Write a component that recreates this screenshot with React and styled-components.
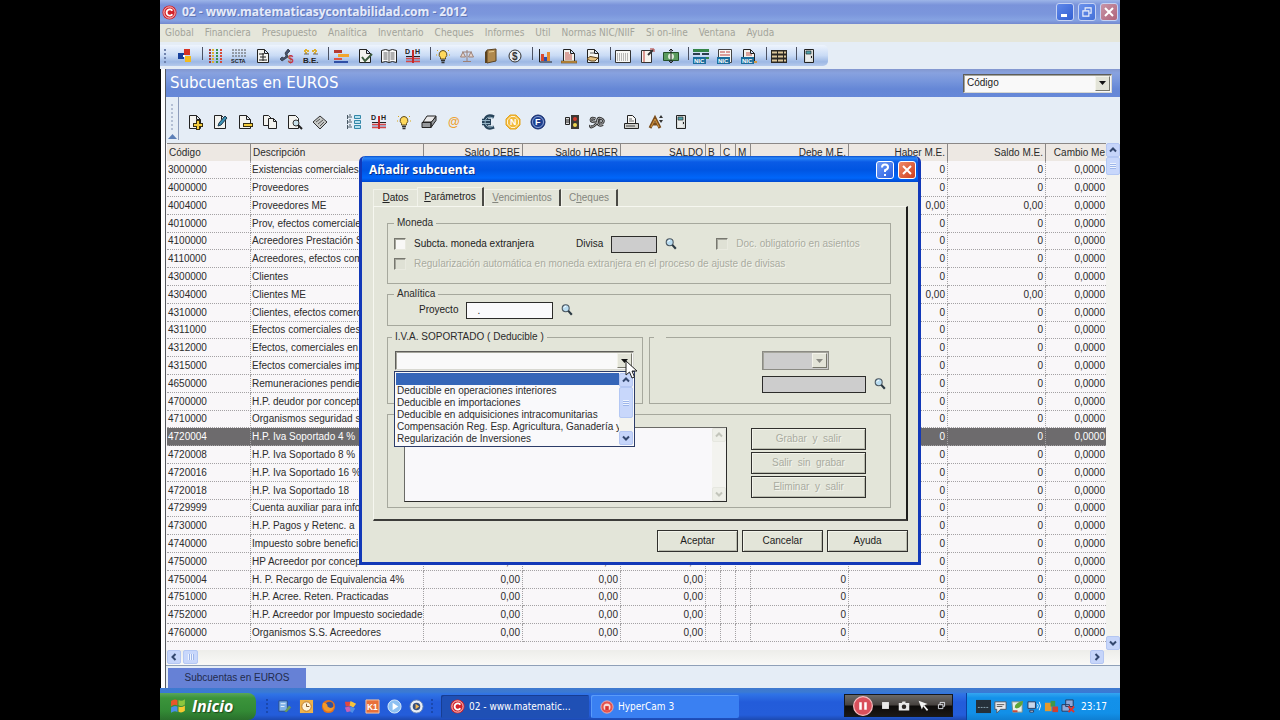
import React from "react";
import styled, { createGlobalStyle, css } from "styled-components";

const ui = '"Liberation Sans", Arial, sans-serif';
const tahoma = '"DejaVu Sans Condensed", "DejaVu Sans", Tahoma, sans-serif';

const Global = createGlobalStyle`
  *, *::before, *::after { box-sizing: border-box; }
  body { margin: 0; background: #000; font: 10px/12px ${ui}; color: #2b2b2b; }
  button, input, select, textarea { font: inherit; color: inherit; margin: 0; border-radius: 0; }
`;

const Desktop = styled.main`
  position: relative;
  display: flex;
  flex-direction: column;
  width: 75%;
  min-height: 100vh;
  margin: 0 auto;
  background: #e5edf6;
  overflow: hidden;
`;

/* Application frame */
const TitleBar = styled.header`
  display: flex;
  align-items: center;
  gap: 5px;
  height: 24px;
  padding: 0 2px;
  background: linear-gradient(#9db5e8 0, #7a93da 5px, #7b96dc 14px, #86a3e2 20px, #7389cf 24px);
  color: #e6ebfa;
  font: bold 12px/24px "Open Sans", sans-serif;
  text-shadow: 1px 1px 0 #6077b8;
`;
const TitleText = styled.h1`
  flex: 1;
  margin: 0;
  font: inherit;
`;
const WindowButtons = styled.div`
  display: flex;
  gap: 4px;
`;
const CaptionButton = styled.button`
  display: grid;
  place-items: center;
  width: 18px;
  height: 18px;
  padding: 0;
  border: 1px solid ${(p) => (p.$strong ? "#fff" : "#c5d2f4")};
  border-radius: 3px;
  background: ${(p) => p.$fill};
`;

const MenuBar = styled.nav`
  display: flex;
  gap: 11px;
  height: 18px;
  padding-left: 5px;
  background: #e5e6da;
`;
const MenuLink = styled.a`
  color: #a3a49b;
  font: 10px/18px ${tahoma};
  text-decoration: none;
`;

const ToolbarRow = styled.div`
  height: 27px;
  padding-top: 3px;
`;
const MainToolbar = styled.div`
  display: flex;
  align-items: center;
  width: max-content;
  height: 21px;
  padding: 0 7px 0 4px;
  border-radius: 0 5px 5px 0;
  background: linear-gradient(#eef4fd, #c9dbf5 50%, #9db8e4 80%, #b5caec);
`;
const Grip = styled.span`
  width: 2px;
  height: ${(p) => p.$h}px;
  margin-right: ${(p) => p.$gap || 0}px;
  background: repeating-linear-gradient(${(p) => p.$color || "#6f83ad"} 0 2px, transparent 2px 4px);
`;
const ToolButton = styled.button`
  display: grid;
  place-items: center;
  width: ${(p) => p.$w}px;
  height: 20px;
  padding: 0;
  border: 0;
  background: none;
`;
const ToolSeparator = styled.span`
  width: 6px;
  height: 13px;
  margin-bottom: 4px;
  border-right: 1px solid #4b5263;
`;

/* Child window */
const Child = styled.section`
  display: flex;
  flex: 1;
  flex-direction: column;
  padding-left: 4px;
  border-left: 1px solid #000;
  background: #fdfdfd;
`;
const ChildInner = styled.div`
  display: flex;
  flex: 1;
  flex-direction: column;
  min-width: 0;
  border-left: 1px solid #55585f;
  background: #f9f7f9;
`;
const ChildTitle = styled.div`
  display: flex;
  align-items: center;
  justify-content: space-between;
  height: 28px;
  padding: 0 8px 0 4px;
  background: linear-gradient(#8397cf, #88a2df 4px, #7796dc 12px, #6587d6 20px, #6688d8);
  color: #fff;
`;
const ChildHeading = styled.h2`
  margin: 0;
  font: 15px/28px "DejaVu Sans", Verdana, sans-serif;
`;
const SelectBox = styled.span`
  position: relative;
  display: flex;
  width: ${(p) => p.$w}px;
  height: ${(p) => p.$h}px;
  border: 1px solid;
  border-color: ${(p) => (p.disabled ? "#8b8b84" : "#5e5e5a #d8d8d0 #d8d8d0 #5e5e5a")};
  background: ${(p) => (p.disabled ? "#cdcdcd" : "#f9f9f9")};
  box-shadow: inset 1px 1px 0 #a5a59c;
  color: #222;
`;
const NativeSelect = styled.select`
  flex: 1;
  min-width: 0;
  padding: 0 3px;
  border: 0;
  background: transparent;
  appearance: none;
  opacity: 1;
`;
const SelectArrow = styled.span`
  display: grid;
  place-items: center;
  width: 15px;
  margin: 1px;
  border: 1px solid;
  border-color: #f3f3ea #77776c #77776c #f3f3ea;
  background: #e3e4d8;
  pointer-events: none;
`;

const ChildTools = styled.div`
  display: flex;
  height: 46px;
  background: #e5edf6;
`;
const ToolsHandle = styled.div`
  display: flex;
  flex-direction: column;
  align-items: center;
  justify-content: space-between;
  width: 13px;
  padding: 7px 0 1px;
  border-right: 1px solid #8d9cba;
  margin-bottom: 3px;
`;
const ToolGroups = styled.div`
  display: flex;
  gap: 9px;
  height: 49px;
  align-items: center;
  padding-left: 3px;
`;
const ToolGroup = styled.div`
  display: flex;
`;

/* Grid */
const GridArea = styled.div`
  display: flex;
  flex: 1;
`;
const GridClip = styled.div`
  flex: 1;
  min-width: 0;
  overflow: hidden;
  padding: 0 0 8px 1px;
`;
const Grid = styled.table`
  width: calc(100% + 2px);
  table-layout: fixed;
  border-spacing: 0;
`;
const Th = styled.th`
  height: 18px;
  padding: 0 2px 1px;
  border: solid #8b8887;
  border-width: 1px 1px 0 0;
  background: #ede8e3;
  font-weight: normal;
  line-height: 15px;
  text-align: ${(p) => p.$align};
  white-space: nowrap;
  overflow: hidden;
`;
const Td = styled.td`
  height: inherit;
  padding: 0 2px 0 1px;
  border: dotted #a4a2a4;
  border-width: 0 1px 1px 0;
  line-height: 16px;
  text-align: ${(p) => p.$align};
  white-space: nowrap;
  overflow: hidden;
`;
const Tr = styled.tr`
  height: 18px;
  &:nth-child(5n) { height: 17px; }
  ${(p) => p.$selected && css`
    background: #6d6b6d;
    color: #fff;
  `}
`;

const VTrack = styled.div`
  display: flex;
  flex-direction: column;
  width: 14px;
  background: #f3f3ef;
  & > :last-child { margin-top: auto; }
`;
const HTrack = styled.div`
  display: flex;
  height: 15px;
  padding: 0 16px 0 1px;
  background: linear-gradient(#ededea, #f9f9f7);
  & > :last-child { margin-left: auto; }
`;
const ScrollButton = styled.button`
  display: grid;
  place-items: center;
  width: 14px;
  height: 14px;
  padding: 0;
  border: 1px solid ${(p) => (p.disabled ? "#e6e7e0" : "#b4c6f2")};
  border-radius: 2px;
  background: ${(p) => (p.disabled ? "#eeefe8" : "#c6d5fa")};
`;
const Thumb = styled.span`
  width: ${(p) => p.$w || 14}px;
  height: ${(p) => p.$h || 14}px;
  border: 1px solid #b4c8f4;
  border-radius: 2px;
  margin-left: ${(p) => p.$ml || 0}px;
  background:
    repeating-linear-gradient(${(p) => (p.$side ? "90deg, " : "")}#eef4fe 0 1px, #9db5ea 1px 2px) center / 6px 6px no-repeat,
    #c8d7fb;
`;

const TabStrip = styled.div`
  height: 23px;
  padding: 2px 2px 1px;
  border-top: 1px solid #8fa0b8;
  background: #e5edf6;
`;
const WindowTab = styled.button`
  width: 138px;
  height: 20px;
  padding: 0;
  border: 0;
  background: #6681d6;
  color: #222b4c;
`;

/* Dialog */
const Dialog = styled.section`
  position: absolute;
  top: 156px;
  left: 0;
  right: 0;
  width: 562px;
  margin: 0 auto;
  border: solid #1238b8;
  border-width: 0 3px 3px;
  border-radius: 6px 6px 0 0;
  background: #e3e5d9;
  overflow: hidden;
`;
const DialogTitle = styled.header`
  display: flex;
  align-items: center;
  gap: 4px;
  height: 26px;
  margin: 0 -3px;
  padding: 1px 5px 0 10px;
  background: linear-gradient(#0a4ecb 0, #2a86f8 2px, #0a5be6 6px, #0055e2 14px, #0066fa 22px, #0048d0 26px);
  color: #fff;
  text-shadow: 1px 1px 0 #0b2f87;
`;
const DialogHeading = styled.h2`
  flex: 1;
  margin: 0;
  font: bold 12px/24px "Open Sans", sans-serif;
`;
const DialogBody = styled.div`
  padding: 5px 10px 10px 11px;
`;
const Tabs = styled.div`
  display: flex;
  align-items: flex-end;
  height: 19px;
`;
const Tab = styled.button`
  height: ${(p) => (p.$active ? 19 : 17)}px;
  width: ${(p) => p.$w}px;
  padding: 0;
  border: solid;
  border-width: 1px ${(p) => (p.$edge ? 2 : 0)}px 0 1px;
  border-color: #f1f2ea #4a4a45 transparent #f1f2ea;
  background: #e3e5d9;
  color: ${(p) => (p.disabled ? "#85867e" : "#222")};
`;
const TabPage = styled.div`
  display: flex;
  flex-direction: column;
  padding: 10px 15px 11px 13px;
  border: solid;
  border-width: 1px 2px 2px 1px;
  border-color: #f6f7f0 #1d1d1b #3c3c39 #f6f7f0;
`;
const Group = styled.fieldset`
  min-width: 0;
  height: ${(p) => p.$h}px;
  margin: ${(p) => p.$mt || 0}px 0 0;
  padding: ${(p) => p.$pad || "0 6px"};
  border: 1px solid #a6a89d;
`;
const Legend = styled.legend`
  height: 12px;
  margin-left: ${(p) => p.$ml || 0}px;
  padding: 0 3px;
  min-width: 12px;
`;
const Line = styled.div`
  display: flex;
  align-items: center;
  height: 20px;
  padding-left: ${(p) => p.$pl || 0}px;
`;
const CheckLabel = styled.label`
  display: flex;
  align-items: center;
  gap: 8px;
  margin-left: ${(p) => p.$ml || 0}px;
  color: ${(p) => (p.$off ? "#a9aba0" : "#222")};
  text-shadow: ${(p) => (p.$off ? "1px 1px 0 #f3f4ec" : "none")};
`;
const Check = styled.input`
  appearance: none;
  width: 12px;
  height: 12px;
  border: 1px solid;
  border-color: #77776f #e9eae0 #e9eae0 #77776f;
  background: ${(p) => (p.disabled ? "#dfe1d5" : "#f8f8f6")};
  box-shadow: inset 1px 1px 0 #a5a69c;
`;
const FieldLabel = styled.label`
  margin-left: ${(p) => p.$ml || 0}px;
  margin-right: 8px;
  color: #222;
`;
const Field = styled.input`
  width: ${(p) => p.$w}px;
  height: 17px;
  padding: 0 10px;
  border: 1px solid #2c2c2a;
  background: ${(p) => (p.disabled ? "#cdcdcd" : "#fafafc")};
`;
const LensButton = styled.button`
  display: grid;
  width: 14px;
  height: 14px;
  margin-left: 7px;
  padding: 0;
  border: 0;
  background: none;
`;
const Pair = styled.div`
  display: grid;
  grid-template-columns: 256px 1fr;
  gap: 6px;
  margin-top: 5px;
`;
const RightFields = styled.div`
  display: flex;
  flex-direction: column;
  gap: 4px;
  padding-left: 106px;
`;
const Combo = styled.div`
  position: relative;
`;
const Popup = styled.div`
  position: absolute;
  top: 20px;
  left: -1px;
  z-index: 2;
  display: flex;
  width: 241px;
  padding: 1px;
  border: 1px solid #2c3c68;
  background: #f9f9fb;
`;
const Options = styled.ul`
  flex: 1;
  min-width: 0;
  margin: 0;
  padding: 0;
  list-style: none;
  overflow: hidden;
`;
const Option = styled.li`
  height: 12px;
  padding-left: 1px;
  background: ${(p) => (p.$on ? "#3566b8" : "transparent")};
  white-space: nowrap;
`;
const Pointer = styled.svg`
  position: absolute;
  top: 9px;
  left: 230px;
  z-index: 3;
`;
const Notes = styled.div`
  display: flex;
  justify-content: space-between;
  align-items: flex-start;
`;
const TextBox = styled.div`
  display: flex;
  width: 323px;
  height: 75px;
  border: 1px solid;
  border-color: #6a6a66 #2c2c2a #2c2c2a #6a6a66;
`;
const TextArea = styled.textarea`
  flex: 1;
  min-width: 0;
  padding: 2px;
  border: 0;
  background: #f9f8fa;
  resize: none;
`;
const SideButtons = styled.div`
  display: grid;
  gap: 2px;
  padding-top: 1px;
`;
const PushButton = styled.button`
  width: ${(p) => p.$w}px;
  height: 22px;
  padding: 0;
  border: 1px solid #30302d;
  background: #e3e5d9;
  box-shadow: inset 1px 1px 0 #f2f3ea, inset -1px -1px 0 #b9bbae;
  color: ${(p) => (p.disabled ? "#a9aba0" : "#1c1c1c")};
  text-shadow: ${(p) => (p.disabled ? "1px 1px 0 #f3f4ec" : "none")};
  white-space: pre;
`;
const Actions = styled.footer`
  display: flex;
  justify-content: flex-end;
  gap: 4px;
  padding-top: 9px;
`;

/* Taskbar */
const Taskbar = styled.footer`
  display: flex;
  align-items: stretch;
  height: 32px;
  padding-top: 5px;
  background: linear-gradient(#3f79cf 0, #3b7ad2 4px, #2f73e6 6px, #235cda 14px, #245dda 27px, #1c49b0 32px);
  color: #fff;
  font: 10px/22px ${tahoma};
`;
const Start = styled.button`
  display: flex;
  align-items: center;
  gap: 5px;
  width: 96px;
  padding: 0 0 2px 10px;
  border: 0;
  border-radius: 0 8px 8px 0;
  background: linear-gradient(#5aa65a 0, #3b943b 5px, #338a35 18px, #2a6f2c 27px);
  color: #fff;
  font: italic bold 16px/20px "Open Sans", sans-serif;
  text-shadow: 1px 1px 1px #1d4a1f;
`;
const Quick = styled.div`
  display: flex;
  align-items: center;
  gap: 7px;
  padding: 0 8px 0 10px;
`;
const Launch = styled.button`
  display: grid;
  width: 15px;
  height: 16px;
  padding: 0;
  border: 0;
  background: none;
`;
const TaskButton = styled.button`
  display: flex;
  align-items: center;
  gap: 4px;
  width: 148px;
  height: 23px;
  margin: 2px 2px 0 0;
  padding: 0 9px;
  border: 0;
  border-radius: 2px;
  background: ${(p) => (p.$pressed ? "#1f50b5" : "#3a80f2")};
  box-shadow: inset 1px 1px 0 ${(p) => (p.$pressed ? "#173e93" : "#5a9bf8")};
  color: #fff;
`;
const Recorder = styled.div`
  display: flex;
  align-items: center;
  gap: 7px;
  width: 109px;
  height: 23px;
  margin: 1px 13px 0 auto;
  padding: 0 4px 0 8px;
  border: 1px solid #15191f;
  background: linear-gradient(#6b6a68 0, #47423f 10px, #0d0b0a 11px, #1b1816);
`;
const Tray = styled.div`
  display: flex;
  align-items: center;
  gap: 2px;
  width: 154px;
  padding: 0 13px 0 9px;
  border-left: 1px solid #0b3f9e;
  background: linear-gradient(#35a6f0 0, #1391ea 5px, #1290e8 20px, #0f7fd2);
`;
const Clock = styled.time`
  margin-left: auto;
`;

/* Drawings, on a 16 by 16 canvas */
const page = (
  <path d="M2.500 1.500h7l4 4v9h-11z M9.500 1.500v4h4" fill="#f3f3ef" stroke="#222" />
);
const tiny = { fontFamily: "Liberation Sans", fontWeight: "bold" };
const lens = (
  <g>
    <circle cx="6.500" cy="6" r="4" fill="#b9dcf0" stroke="#4a5660" strokeWidth="1.200" />
    <path d="M4.500 5.500q.5-2 2.500-1.700" stroke="#fff" fill="none" />
    <path d="M9.500 9l4 4.500" stroke="#2c3a44" strokeWidth="2.400" />
  </g>
);
const door = (
  <g>
    <path d="M3.500 1.500h9v13h-9z" fill="#d9dcda" stroke="#222" />
    <path d="M5 3h5v3H5z" fill="#4fa3ad" stroke="#222" strokeWidth=".6" />
    <path d="M10 8h1v2h-1z" fill="#222" />
    <path d="M5 8h4M5 10h4M5 12h5" stroke="#fff" />
  </g>
);
const bulb = (
  <g>
    <path d="M8 2.500a4 4 0 0 1 2.500 7v1.500h-5V9.500A4 4 0 0 1 8 2.500z" fill="#ffd95c" stroke="#5e4a1a" />
    <path d="M6 12.500h4M6.500 14.500h3" stroke="#333" strokeWidth="1.500" />
    <path d="M2 2l1 1M14 2l-1 1M1 7h1M14 7h1" stroke="#d9a514" />
  </g>
);
const dh = (
  <g>
    <text x="0" y="6" fontSize="7" {...tiny} fill="#222">D</text>
    <text x="10" y="6" fontSize="7" {...tiny} fill="#222">H</text>
    <path d="M1 8.500h14" stroke="#222" />
    <path d="M8 2v13" stroke="#c52a2a" strokeWidth="2" />
    <path d="M1 10.500h6M9 10.500h6M1 13.500h6M9 13.500h6" stroke="#d84747" strokeWidth="1.500" />
    <path d="M1 12h6M9 12h6" stroke="#7e8ab6" />
  </g>
);
const nic = (
  <g>
    <path d="M0 9h13v7H0z" fill="#1a6d9c" />
    <text x="1" y="15" fontSize="6" {...tiny} fill="#fff">NIC</text>
  </g>
);
const drawings = {
  blocks: <g><path d="M1 5h6v6H1z" fill="#16409c" /><path d="M7 1h6v6H7z" fill="#d63324" /><path d="M8 8h6v6H8z" fill="#f3bb1c" /><path d="M6 7h2v2H6z" fill="#fff" /></g>,
  colorList: (
    <g strokeWidth="2" fill="none">
      <path d="M3 1v14" stroke="#a43b3b" strokeDasharray="2 1" /><path d="M6 1v14" stroke="#e0b030" strokeDasharray="2 1" />
      <path d="M10 1v14" stroke="#3c9447" strokeDasharray="2 1" /><path d="M14 1v14" stroke="#d64a38" strokeDasharray="2 1" />
    </g>
  ),
  scta: <g><path d="M1 2h14M1 5h14M1 8h14" stroke="#555" strokeDasharray="2 1" /><text x="0" y="15" fontSize="5.500" {...tiny} fill="#222">SCTA</text></g>,
  ledger: <g>{page}<path d="M4 6h5M8 5v8M5 9h6M4 12h8" stroke="#222" fill="none" /></g>,
  phone: <g><path d="M9 1l2 2-3 3 1 3-6 4-2-2 2-2 2 1 2-2-1-3z" fill="#44536f" stroke="#222" strokeWidth=".6" /><text x="9" y="15" fontSize="10" {...tiny} fill="#c23a3a">$</text></g>,
  be: <g><path d="M1 3h5M9 3h6M3 1v5M12 1v5" stroke="#e0b030" strokeWidth="2" strokeDasharray="2 1" /><path d="M1 6h5M10 6h5" stroke="#666" /><text x="0" y="15" fontSize="8" {...tiny} fill="#222">B.E.</text></g>,
  bars: <g><path d="M1 2h8v3H1z" fill="#b63a32" /><path d="M5 6h11v3H5z" fill="#f2a52e" /><path d="M1 10h8v2H1z" fill="#df5344" /><path d="M1 13h14v2H1z" fill="#2f4fa6" /></g>,
  checked: <g>{page}<path d="M5 9l3 4 7-7" stroke="#3b5b3c" strokeWidth="2" fill="none" /></g>,
  book: <g><path d="M.5 2.500q4.500-2 7.500 0 3-2 7.500 0v12q-4.500-2-7.500 0-3-2-7.500 0z" fill="#f8f8f8" stroke="#222" /><path d="M8 2v12M2.500 5h4M2.500 7h4M2.500 9h4M2.500 11h4M9.500 5h4M9.500 7h4M9.500 9h4M9.500 11h4" stroke="#666" /></g>,
  dh,
  bulb,
  scales: <g stroke="#9b8076" fill="none"><path d="M8 2v11M3 4h10M4 13.500h8" /><path d="M4 4l-2.500 5h5zM12 4L9.500 9h5z" fill="#e7d6ce" /></g>,
  tan: <g><path d="M4 2l9-1v12l-9 2z" fill="#b0894e" stroke="#5a4220" /><path d="M4 2L2 4v11l2 0z" fill="#5a4220" /><path d="M6 4l5-.6" stroke="#e8cd92" /></g>,
  coin: <g><circle cx="8" cy="8" r="6" fill="#e6ebf2" stroke="#333" /><text x="5" y="12" fontSize="10" {...tiny} fill="#333">$</text></g>,
  chart: <g><path d="M2.500 1v13H15" stroke="#222" fill="none" /><path d="M4 6h3v7H4z" fill="#d8482e" /><path d="M7 9h3v4H7z" fill="#2b4db0" /><path d="M10 4h3v9h-3z" fill="#e58b30" /></g>,
  report: <g>{page}<path d="M4 5h4M4 7h7M4 9h7M4 11h7" stroke="#c05248" /><path d="M0 13h16v2H0z" fill="#cf9843" stroke="#5e431a" strokeWidth=".6" /></g>,
  hand: <g>{page}<path d="M5 5h4" stroke="#666" /><path d="M2 11q3-4 6-2l5 1-3 3H6z" fill="#e8c381" stroke="#59401c" /></g>,
  calendar: <g><path d="M.5 2.500h15v12H.5z" fill="#f7f7f5" stroke="#333" /><path d="M2 6h12M2 8h12M2 10h12M2 12h12" stroke="#777" strokeDasharray="1 1" /></g>,
  notebook: <g><path d="M2.500 2.500h10v12h-10z" fill="#f7f4ee" stroke="#333" /><path d="M5 3v11" stroke="#c1423a" /><path d="M9 7l5-5" stroke="#333" strokeWidth="2" /><path d="M11 1h4v3" stroke="#b23a34" fill="none" /></g>,
  money: <g><path d="M.5 4.500h15v8H.5z" fill="#5a9c5e" stroke="#23502a" /><circle cx="8" cy="8.500" r="3" fill="#dcebd8" /><path d="M8 1v14M6 3l2-2 2 2M6 13l2 2 2-2" stroke="#222" fill="none" /></g>,
  nicBars: <g><path d="M0 1h16v3H0z" fill="#35864a" /><path d="M0 5h7v2H0zM9 5h7v2H9z" fill="#2b3d4f" /><path d="M13 9h3v2h-3z" fill="#35864a" />{nic}</g>,
  nicPage: <g><path d="M1.500 1.500h13v13h-13z" fill="#f7f7f5" stroke="#444" /><path d="M3 4h5M9 4h4M3 7h10" stroke="#c0453f" />{nic}</g>,
  nicReport: <g>{page}<path d="M5 5h4M5 7h6" stroke="#c05248" /><path d="M12 13h4v2h-4z" fill="#cf9843" />{nic}</g>,
  abacus: <g><path d="M0 2h16v13H0z" fill="#2a2722" /><path d="M1 4.500h14M1 8.500h14M1 12.500h14" stroke="#dcc79b" strokeWidth="2" strokeDasharray="5 1" /></g>,
  door,
  add: <g>{page}<path d="M11 6v10M6 11h10" stroke="#3a3010" strokeWidth="4" /><path d="M11 7v8M7 11h8" stroke="#f7ce3c" strokeWidth="2" /></g>,
  edit: <g>{page}<path d="M6 12l1-3 6-7 2 2-6 7z" fill="#3e93b5" stroke="#1d3a52" /></g>,
  remove: <g>{page}<path d="M6 11h10" stroke="#3a3010" strokeWidth="4" /><path d="M7 11h8" stroke="#f7ce3c" strokeWidth="2" /></g>,
  copy: <g fill="#f3f3ef" stroke="#222"><path d="M1.500 1.500h5l3 3v7h-8z" /><path d="M6.500 4.500h5l3 3v7h-8z" /><path d="M11.500 4.500v3h3" fill="none" /></g>,
  find: <g><path d="M1.500 1.500h7l3 3v10h-10z" fill="#f3f3ef" stroke="#222" /><circle cx="9" cy="9" r="3" fill="#c9e1ea" stroke="#333" /><path d="M11 11l4 4" stroke="#222" strokeWidth="2" /></g>,
  note: <g><path d="M1 8l7-6 7 6-7 7z" fill="#c6c8c6" stroke="#333" /><path d="M4 8l4-3M6 10l5-4M8 12l4-4" stroke="#555" /></g>,
  tree: <g><path d="M1 3h5M1 8h5M1 13h5M1.500 1v4M1.500 6v4M1.500 11v4M5 1h-2M5 6H3M5 11H3" stroke="#4a5a66" fill="none" /><path d="M8.500 1.500h6v3h-6zM8.500 6.500h6v3h-6zM8.500 11.500h6v3h-6z" fill="#b4e0ef" stroke="#3287a8" /></g>,
  eraser: <g><path d="M6 2h9l-4 6H2z" fill="#e9e9ea" stroke="#222" /><path d="M1 8.500h9v5H1zM10 8.500l5-6v4l-5 7z" fill="#96999c" stroke="#222" /></g>,
  at: <text x="2" y="12" fontSize="12" fontFamily="Liberation Sans" fontWeight="bold" fill="#eda12f">@</text>,
  euro: <g fill="none"><path d="M14 3Q6-.5 4.500 8 6 16.500 14 13M2 6.500h9M2 9.500h9" stroke="#27435a" strokeWidth="3.400" /><path d="M13 4Q6 1 5 8q1 7 8 4.500M2 6.500h8M2 9.500h8" stroke="#93b2c4" strokeWidth="1" /></g>,
  n: <g><path d="M5 1h6l4 4v6l-4 4H5l-4-4V5z" fill="#f2b93a" stroke="#e3a41f" /><path d="M6 2.500h4L13.500 6v4L10 13.500H6L2.500 10V6z" fill="none" stroke="#fff3cf" /><text x="5" y="11" fontSize="9" {...tiny} fill="#fff">N</text></g>,
  f: <g><circle cx="8" cy="8" r="7" fill="#1d3f8f" stroke="#14296a" /><circle cx="8" cy="8" r="5.500" fill="none" stroke="#a9bfe9" strokeWidth=".8" /><text x="5" y="11" fontSize="9" {...tiny} fill="#fff">F</text></g>,
  traffic: <g><path d="M7 1h8v14H7z" fill="#3b3934" /><circle cx="11" cy="5" r="2" fill="#d03a2c" /><circle cx="11" cy="11" r="2" fill="#eed750" /><path d="M1.500 3.500h4v7h-4z" fill="#ddd" stroke="#222" /><path d="M2 6h4M2 8h4" stroke="#222" /></g>,
  so: (
    <g fill="none">
      <path d="M6.500 5q-4-2-4.500.5T6 8t-.5 3.500-4-.5M14 10.500q-5 2.500-5.500-2.500T12 4.500t1.500 4.500-2.500-.5 1-2" stroke="#2e2e2e" strokeWidth="2.600" />
      <path d="M6.500 5q-4-2-4.500.5T6 8t-.5 3.500-4-.5M14 10.500q-5 2.500-5.500-2.500T12 4.500t1.500 4.500-2.500-.5 1-2" stroke="#b9bbbd" strokeWidth=".9" />
    </g>
  ),
  printer: <g><path d="M4.500 9.500v-8h5l3 3v5z" fill="#f7f7f5" stroke="#222" /><path d="M6 5h3M6 7h5" stroke="#666" /><path d="M1.500 9.500h14v5h-14z" fill="#cfd0cc" stroke="#222" /><path d="M3 12h9" stroke="#444" /></g>,
  sort: <g><path d="M2 14L7 4l5 10M4 10h6" stroke="#7b4d1c" strokeWidth="3" fill="none" /><path d="M3 13l4-8 4 8" stroke="#d99a3f" fill="none" /><path d="M11 4l2-3 2 3zM11 6l2 3 2-3z" fill="#333" /></g>,
  lens,
  logo: <g><circle cx="8" cy="8" r="7.500" fill="#d2222a" /><circle cx="8" cy="8" r="6" fill="none" stroke="#fff" strokeWidth=".8" /><path d="M11 6.200A3.300 3.300 0 1 0 11 9.800" fill="none" stroke="#fff" strokeWidth="2" /></g>,
  rec: <g><circle cx="8" cy="8" r="7" fill="#e5534e" stroke="#f5b5ad" /><circle cx="8" cy="8" r="4" fill="#f8d9d5" /><path d="M6 7h4v5H6z" fill="#d8322d" /></g>,
  flag: <g transform="skewY(-8) translate(0 2)"><path d="M1 2q3-2 6 0v5q-3-2-6 0z" fill="#e8562a" /><path d="M8 2q3 2 6 0v5q-3 2-6 0z" fill="#8cc63e" /><path d="M1 8q3-2 6 0v5q-3-2-6 0z" fill="#4a8fe8" /><path d="M8 8q3 2 6 0v5q-3 2-6 0z" fill="#f7c92f" /></g>,
  desk: <g><path d="M2 2h9v11H2z" fill="#7fb2e8" stroke="#2a4d8c" /><path d="M4 5h5M4 8h4" stroke="#e9f2fc" /><path d="M8 13l5-6 2 2-5 5z" fill="#6a9b57" /></g>,
  outlook: <g><path d="M1 1h14v14H1z" fill="#efb24a" /><circle cx="8" cy="8" r="5" fill="#fdf2d8" stroke="#b8752a" /><path d="M8 5v3h3" stroke="#7d4d1d" fill="none" /></g>,
  fox: <g><circle cx="8" cy="8" r="7" fill="#e0701e" /><circle cx="9" cy="7" r="4" fill="#35539c" /><path d="M2 4q5 0 5 4 3 3 7 0-2 7-8 5-5-2-4-9z" fill="#f49a2a" /></g>,
  pinwheel: <g><path d="M2 3h6v5H3z" fill="#e4483c" /><path d="M8 2l6 3-3 4-4-2z" fill="#f5c33b" /><path d="M8 8l5 2-3 5-4-3z" fill="#4f8fe6" /><path d="M2 9l5-1 1 5-4 1z" fill="#c860b8" /></g>,
  k: <g><path d="M1 1h14v14H1z" fill="#e8703a" stroke="#f6c9a9" /><text x="2" y="12" fontSize="9" {...tiny} fill="#fff">K1</text></g>,
  play: <g><circle cx="8" cy="8" r="7" fill="#8dc0f2" stroke="#dcecfb" /><path d="M6 4l6 4-6 4z" fill="#fff" /></g>,
  media: <g><circle cx="8" cy="8" r="7" fill="#e9eef6" stroke="#6583b5" /><circle cx="8" cy="8" r="4" fill="#37507d" /><path d="M7 5l4 3-4 3z" fill="#f6b850" /></g>,
  pause: <g><circle cx="8" cy="8" r="7.500" fill="#d9505c" stroke="#f6bcc0" /><path d="M6 5v6M10 5v6" stroke="#fff" strokeWidth="2" /></g>,
  stop: <path d="M3 3h10v10H3z" fill="#e9e9e9" />,
  camera: <g><path d="M1 4h4l1-2h4v2h5v10H1z" fill="#e9e9e9" /><circle cx="8" cy="9" r="3" fill="#2a2624" /></g>,
  pick: <g><path d="M2 2l11 4-5 2-2 5z" fill="#f3f3f3" /><path d="M8 8l5 6" stroke="#f3f3f3" strokeWidth="2" /></g>,
  restore: <g fill="none" stroke="#f1f4fc" strokeWidth="1.500"><path d="M5.500 6V2.500h8v7H11" /><path d="M2.500 6.500h8v7h-8z" /></g>,
  dark: <g><path d="M0 1h16v14H0z" fill="#25303a" /><path d="M2 9h12" stroke="#8fa8b4" strokeDasharray="2 1" /></g>,
  msg: <g><path d="M2 3h12v8H8l-4 4v-4H2z" fill="#e7e9ec" stroke="#4a5866" /><path d="M4 6h8M4 8h6" stroke="#555" /></g>,
  green: <g><path d="M2 3h11v11H3z" fill="#eaf0ea" stroke="#7b8d88" /><path d="M5 9q1-6 9-7-1 7-7 8z" fill="#5ea53a" /><path d="M3 12h5v2H3z" fill="#c94b3a" /></g>,
  wifi: <g><path d="M1 3h8v7H1zM3 12h4v2H3z" fill="#c9d6ea" stroke="#25395e" /><path d="M11 5q2 2 0 5M13 3q3 4 0 9" stroke="#e8f1fb" fill="none" /></g>,
  people: <g><path d="M1 4h7v9H1z" fill="#e59a2c" /><path d="M7 2h5v6H7z" fill="#3f9a48" /><path d="M9 8h6v6H9z" fill="#d2402f" /></g>,
  nonet: <g><path d="M5 1h8v7H5zM1 6h8v7H1z" fill="#8fa8d8" stroke="#25395e" /><path d="M8 8l6 6M14 8l-6 6" stroke="#e0352b" strokeWidth="2" /></g>,
};

const Icon = ({ name, size = 16 }) => (
  <svg width={size} height={size} viewBox="0 0 16 16" aria-hidden="true">{drawings[name]}</svg>
);
const turns = { up: 0, right: 90, down: 180, left: 270 };
const Chevron = ({ dir, color = "#33476e" }) => (
  <svg width="8" height="8" viewBox="0 0 8 8" aria-hidden="true">
    <path d="M1 5.500L4 2.500l3 3" fill="none" stroke={color} strokeWidth="2" transform={`rotate(${turns[dir]} 4 4)`} />
  </svg>
);
const Triangle = ({ color = "#111" }) => (
  <svg width="7" height="4" viewBox="0 0 7 4" aria-hidden="true"><path d="M0 0h7L3.500 4z" fill={color} /></svg>
);
const Cross = () => (
  <svg width="10" height="10" viewBox="0 0 10 10" aria-hidden="true"><path d="M1 1l8 8M9 1L1 9" stroke="#fff" strokeWidth="2" /></svg>
);

const menus = ["Global", "Financiera", "Presupuesto", "Analítica", "Inventario", "Cheques", "Informes", "Util", "Normas NIC/NIIF", "Si on-line", "Ventana", "Ayuda"];
const mainTools = [
  ["blocks"],
  ["colorList", "scta", "ledger", "phone", "be"],
  ["bars", "checked", "book", "dh"],
  ["bulb", "scales", "tan", "coin"],
  ["chart", "report", "hand"],
  ["calendar", "notebook", "money"],
  ["nicBars", "nicPage", "nicReport"],
  ["abacus"],
  ["door"],
];
const childTools = [
  ["add", "edit", "remove", "copy", "find", "note"],
  ["tree", "dh", "bulb", "eraser", "at"],
  ["euro", "n", "f"],
  ["traffic", "so"],
  ["printer", "sort", "door"],
];
const columns = [
  ["Código", 84, "left"], ["Descripción", null, "left"], ["Saldo DEBE", 99, "right"], ["Saldo HABER", 98, "right"],
  ["SALDO", 85, "right"], ["B", 15, "left"], ["C", 15, "left"], ["M", 15, "left"], ["Debe M.E.", 98, "right"],
  ["Haber M.E.", 99, "right"], ["Saldo M.E.", 98, "right"], ["Cambio Me", 62, "right"],
];
const accounts = [
  ["3000000", "Existencias comerciales"], ["4000000", "Proveedores"], ["4004000", "Proveedores ME"],
  ["4010000", "Prov, efectos comerciale"], ["4100000", "Acreedores Prestación S"], ["4110000", "Acreedores, efectos com"],
  ["4300000", "Clientes"], ["4304000", "Clientes ME"], ["4310000", "Clientes, efectos comerc"],
  ["4311000", "Efectos comerciales des"], ["4312000", "Efectos, comerciales en"], ["4315000", "Efectos comerciales imp"],
  ["4650000", "Remuneraciones pendie"], ["4700000", "H.P. deudor por concept"], ["4710000", "Organismos seguridad so"],
  ["4720004", "H.P. Iva Soportado 4 %"], ["4720008", "H.P. Iva Soportado 8 %"], ["4720016", "H.P. Iva Soportado 16 %"],
  ["4720018", "H.P. Iva Soportado 18"], ["4729999", "Cuenta auxiliar para info"], ["4730000", "H.P. Pagos y Retenc. a"],
  ["4740000", "Impuesto sobre benefici"], ["4750000", "HP Acreedor por concep"], ["4750004", "H. P. Recargo de Equivalencia 4%"],
  ["4751000", "H.P. Acree. Reten. Practicadas"], ["4752000", "H.P. Acreedor por Impuesto sociedade"], ["4760000", "Organismos S.S. Acreedores"],
];
const cells = ([code, name]) => {
  const me = name.endsWith(" ME") ? "0,00" : "0";
  return [code, name, "0,00", "0,00", "0,00", "", "", "", me, me, me, "0,0000"];
};
const deductions = ["", "Deducible en operaciones interiores", "Deducible en importaciones", "Deducible en adquisiciones intracomunitarias", "Compensación Reg. Esp. Agricultura, Ganadería y", "Regularización de Inversiones"];

function AccountDialog() {
  return (
    <Dialog role="dialog" aria-labelledby="dlg-title">
      <DialogTitle>
        <DialogHeading id="dlg-title">Añadir subcuenta</DialogHeading>
        <CaptionButton $strong $fill="linear-gradient(135deg,#6f9cf8,#2a5fe0)" aria-label="Ayuda">
          <svg width="12" height="14" viewBox="0 0 12 14" aria-hidden="true"><path d="M3 4.500Q3 1.500 6 1.500t3 2.700Q9 6 6 7.200V9M6 11v2" fill="none" stroke="#fff" strokeWidth="2" /></svg>
        </CaptionButton>
        <CaptionButton $strong $fill="linear-gradient(135deg,#ef8a68,#cf3d1c)" aria-label="Cerrar"><Cross /></CaptionButton>
      </DialogTitle>
      <DialogBody>
        <Tabs role="tablist">
          <Tab role="tab" $w={44}><u>D</u>atos</Tab>
          <Tab role="tab" $w={67} $active $edge aria-selected="true"><u>P</u>arámetros</Tab>
          <Tab role="tab" $w={77} $edge disabled><u>V</u>encimientos</Tab>
          <Tab role="tab" $w={57} $edge disabled>C<u>h</u>eques</Tab>
        </Tabs>
        <TabPage>
          <Group $h={67} $pad="5px 6px">
            <Legend>Moneda</Legend>
            <Line>
              <CheckLabel><Check type="checkbox" />Subcta. moneda extranjera</CheckLabel>
              <FieldLabel $ml={42} htmlFor="divisa">Divisa</FieldLabel>
              <Field id="divisa" $w={46} disabled />
              <LensButton aria-label="Buscar divisa"><Icon name="lens" size={14} /></LensButton>
              <CheckLabel $off $ml={38}><Check type="checkbox" disabled />Doc. obligatorio en asientos</CheckLabel>
            </Line>
            <Line>
              <CheckLabel $off><Check type="checkbox" disabled />Regularización automática en moneda extranjera en el proceso de ajuste de divisas</CheckLabel>
            </Line>
          </Group>
          <Group $h={38} $mt={4}>
            <Legend>Analítica</Legend>
            <Line $pl={25}>
              <FieldLabel htmlFor="proyecto">Proyecto</FieldLabel>
              <Field id="proyecto" $w={87} defaultValue="." />
              <LensButton aria-label="Buscar proyecto"><Icon name="lens" size={14} /></LensButton>
            </Line>
          </Group>
          <Pair>
            <Group $h={73} $pad="8px 7px">
              <Legend $ml={-3}>I.V.A. SOPORTADO ( Deducible )</Legend>
              <Combo>
                <SelectBox $w={239} $h={19}>
                  <NativeSelect aria-label="I.V.A. soportado" />
                  <SelectArrow><Triangle /></SelectArrow>
                </SelectBox>
                <Popup>
                  <Options role="listbox">
                    {deductions.map((d, i) => <Option role="option" aria-selected={i === 0} $on={i === 0} key={d}>{d}</Option>)}
                  </Options>
                  <VTrack>
                    <ScrollButton aria-label="Subir"><Chevron dir="up" /></ScrollButton>
                    <Thumb $h={31} />
                    <ScrollButton aria-label="Bajar"><Chevron dir="down" /></ScrollButton>
                  </VTrack>
                </Popup>
                <Pointer width="13" height="20" viewBox="0 0 13 20" aria-hidden="true">
                  <path d="M1 1v14l3.500-3 2.500 6 2.500-1-2.500-6H12z" fill="#fff" stroke="#222" />
                </Pointer>
              </Combo>
            </Group>
            <Group $h={73} $pad="8px 6px">
              <Legend $ml={-2} />
              <RightFields>
                <SelectBox $w={67} $h={19} disabled>
                  <NativeSelect aria-label="Tipo" disabled />
                  <SelectArrow><Triangle color="#8b8b84" /></SelectArrow>
                </SelectBox>
                <Line>
                  <Field $w={104} aria-label="Cuenta" disabled />
                  <LensButton aria-label="Buscar cuenta"><Icon name="lens" size={14} /></LensButton>
                </Line>
              </RightFields>
            </Group>
          </Pair>
          <Group $h={94} $mt={10} $pad="12px 24px 0 16px">
            <Notes>
              <TextBox>
                <TextArea aria-label="Notas" />
                <VTrack>
                  <ScrollButton aria-label="Subir" disabled><Chevron dir="up" color="#c3c5bb" /></ScrollButton>
                  <ScrollButton aria-label="Bajar" disabled><Chevron dir="down" color="#c3c5bb" /></ScrollButton>
                </VTrack>
              </TextBox>
              <SideButtons>
                <PushButton $w={115} disabled>{"Grabar  y  salir"}</PushButton>
                <PushButton $w={115} disabled>{"Salir  sin  grabar"}</PushButton>
                <PushButton $w={115} disabled>{"Eliminar  y  salir"}</PushButton>
              </SideButtons>
            </Notes>
          </Group>
        </TabPage>
        <Actions>
          <PushButton $w={81}>Aceptar</PushButton>
          <PushButton $w={81}>Cancelar</PushButton>
          <PushButton $w={81}>Ayuda</PushButton>
        </Actions>
      </DialogBody>
    </Dialog>
  );
}

export default function App() {
  return (
    <>
      <Global />
      <Desktop>
        <TitleBar>
          <Icon name="logo" size={15} />
          <TitleText>02 - www.matematicasycontabilidad.com - 2012</TitleText>
          <WindowButtons>
            <CaptionButton $fill="linear-gradient(135deg,#5f88ea,#3460d2)" aria-label="Minimizar">
              <svg width="10" height="10" viewBox="0 0 10 10"><path d="M1 7h6v3H1z" fill="#fff" /></svg>
            </CaptionButton>
            <CaptionButton $fill="linear-gradient(135deg,#6b92ec,#4470d8)" aria-label="Restaurar"><Icon name="restore" size={12} /></CaptionButton>
            <CaptionButton $fill="linear-gradient(135deg,#c795a8,#b0647a)" aria-label="Cerrar"><Cross /></CaptionButton>
          </WindowButtons>
        </TitleBar>
        <MenuBar>{menus.map((m) => <MenuLink href="#" key={m}>{m}</MenuLink>)}</MenuBar>
        <ToolbarRow>
          <MainToolbar>
            <Grip $h={14} $gap={7} />
            {mainTools.map((group, i) => (
              <React.Fragment key={group[0]}>
                {i > 0 && <ToolSeparator />}
                {group.map((n) => <ToolButton $w={24} aria-label={n} key={n}><Icon name={n} /></ToolButton>)}
              </React.Fragment>
            ))}
          </MainToolbar>
        </ToolbarRow>
        <Child>
          <ChildInner>
            <ChildTitle>
              <ChildHeading>Subcuentas en EUROS</ChildHeading>
              <SelectBox $w={149} $h={19}>
                <NativeSelect aria-label="Orden"><option>Código</option></NativeSelect>
                <SelectArrow><Triangle /></SelectArrow>
              </SelectBox>
            </ChildTitle>
            <ChildTools>
              <ToolsHandle>
                <Grip $h={26} $color="#b3bfd4" />
                <svg width="9" height="5" viewBox="0 0 9 5" aria-hidden="true"><path d="M0 5h9L4.500 0z" fill="#5c7fb8" /></svg>
              </ToolsHandle>
              <ToolGroups>
                {childTools.map((group) => (
                  <ToolGroup key={group[0]}>
                    {group.map((n) => <ToolButton $w={25} aria-label={n} key={n}><Icon name={n} /></ToolButton>)}
                  </ToolGroup>
                ))}
              </ToolGroups>
            </ChildTools>
            <GridArea>
              <GridClip>
                <Grid>
                  <colgroup>{columns.map(([c, w]) => <col key={c} width={w || undefined} />)}</colgroup>
                  <thead><tr>{columns.map(([c, , a]) => <Th $align={a} key={c}>{c}</Th>)}</tr></thead>
                  <tbody>
                    {accounts.map((row) => (
                      <Tr key={row[0]} $selected={row[0] === "4720004"}>
                        {cells(row).map((v, i) => <Td $align={columns[i][2]} key={i}>{v}</Td>)}
                      </Tr>
                    ))}
                  </tbody>
                </Grid>
              </GridClip>
              <VTrack>
                <ScrollButton aria-label="Subir"><Chevron dir="up" /></ScrollButton>
                <Thumb $h={18} />
                <ScrollButton aria-label="Bajar"><Chevron dir="down" /></ScrollButton>
              </VTrack>
            </GridArea>
            <HTrack>
              <ScrollButton aria-label="Izquierda"><Chevron dir="left" /></ScrollButton>
              <Thumb $w={15} $ml={2} $side />
              <ScrollButton aria-label="Derecha"><Chevron dir="right" /></ScrollButton>
            </HTrack>
            <TabStrip><WindowTab>Subcuentas en EUROS</WindowTab></TabStrip>
          </ChildInner>
        </Child>
        <Taskbar>
          <Start><Icon name="flag" size={17} />Inicio</Start>
          <Quick>
            <Grip $h={16} $color="#1a48ae" $gap={2} />
            {["desk", "outlook", "fox", "pinwheel", "k", "play", "media"].map((n) => (
              <Launch key={n} aria-label={n}><Icon name={n} size={15} /></Launch>
            ))}
            <Grip $h={16} $color="#1a48ae" />
          </Quick>
          <TaskButton $pressed><Icon name="logo" size={15} />02 - www.matematic...</TaskButton>
          <TaskButton><Icon name="rec" size={14} />HyperCam 3</TaskButton>
          <Recorder>
            <Icon name="pause" size={20} />
            <Icon name="stop" size={11} />
            <Icon name="camera" size={12} />
            <Icon name="pick" size={13} />
            <Icon name="restore" size={9} />
          </Recorder>
          <Tray>
            {["dark", "msg", "green", "wifi", "people", "nonet"].map((n) => <Icon name={n} size={15} key={n} />)}
            <Clock>23:17</Clock>
          </Tray>
        </Taskbar>
        <AccountDialog />
      </Desktop>
    </>
  );
}
